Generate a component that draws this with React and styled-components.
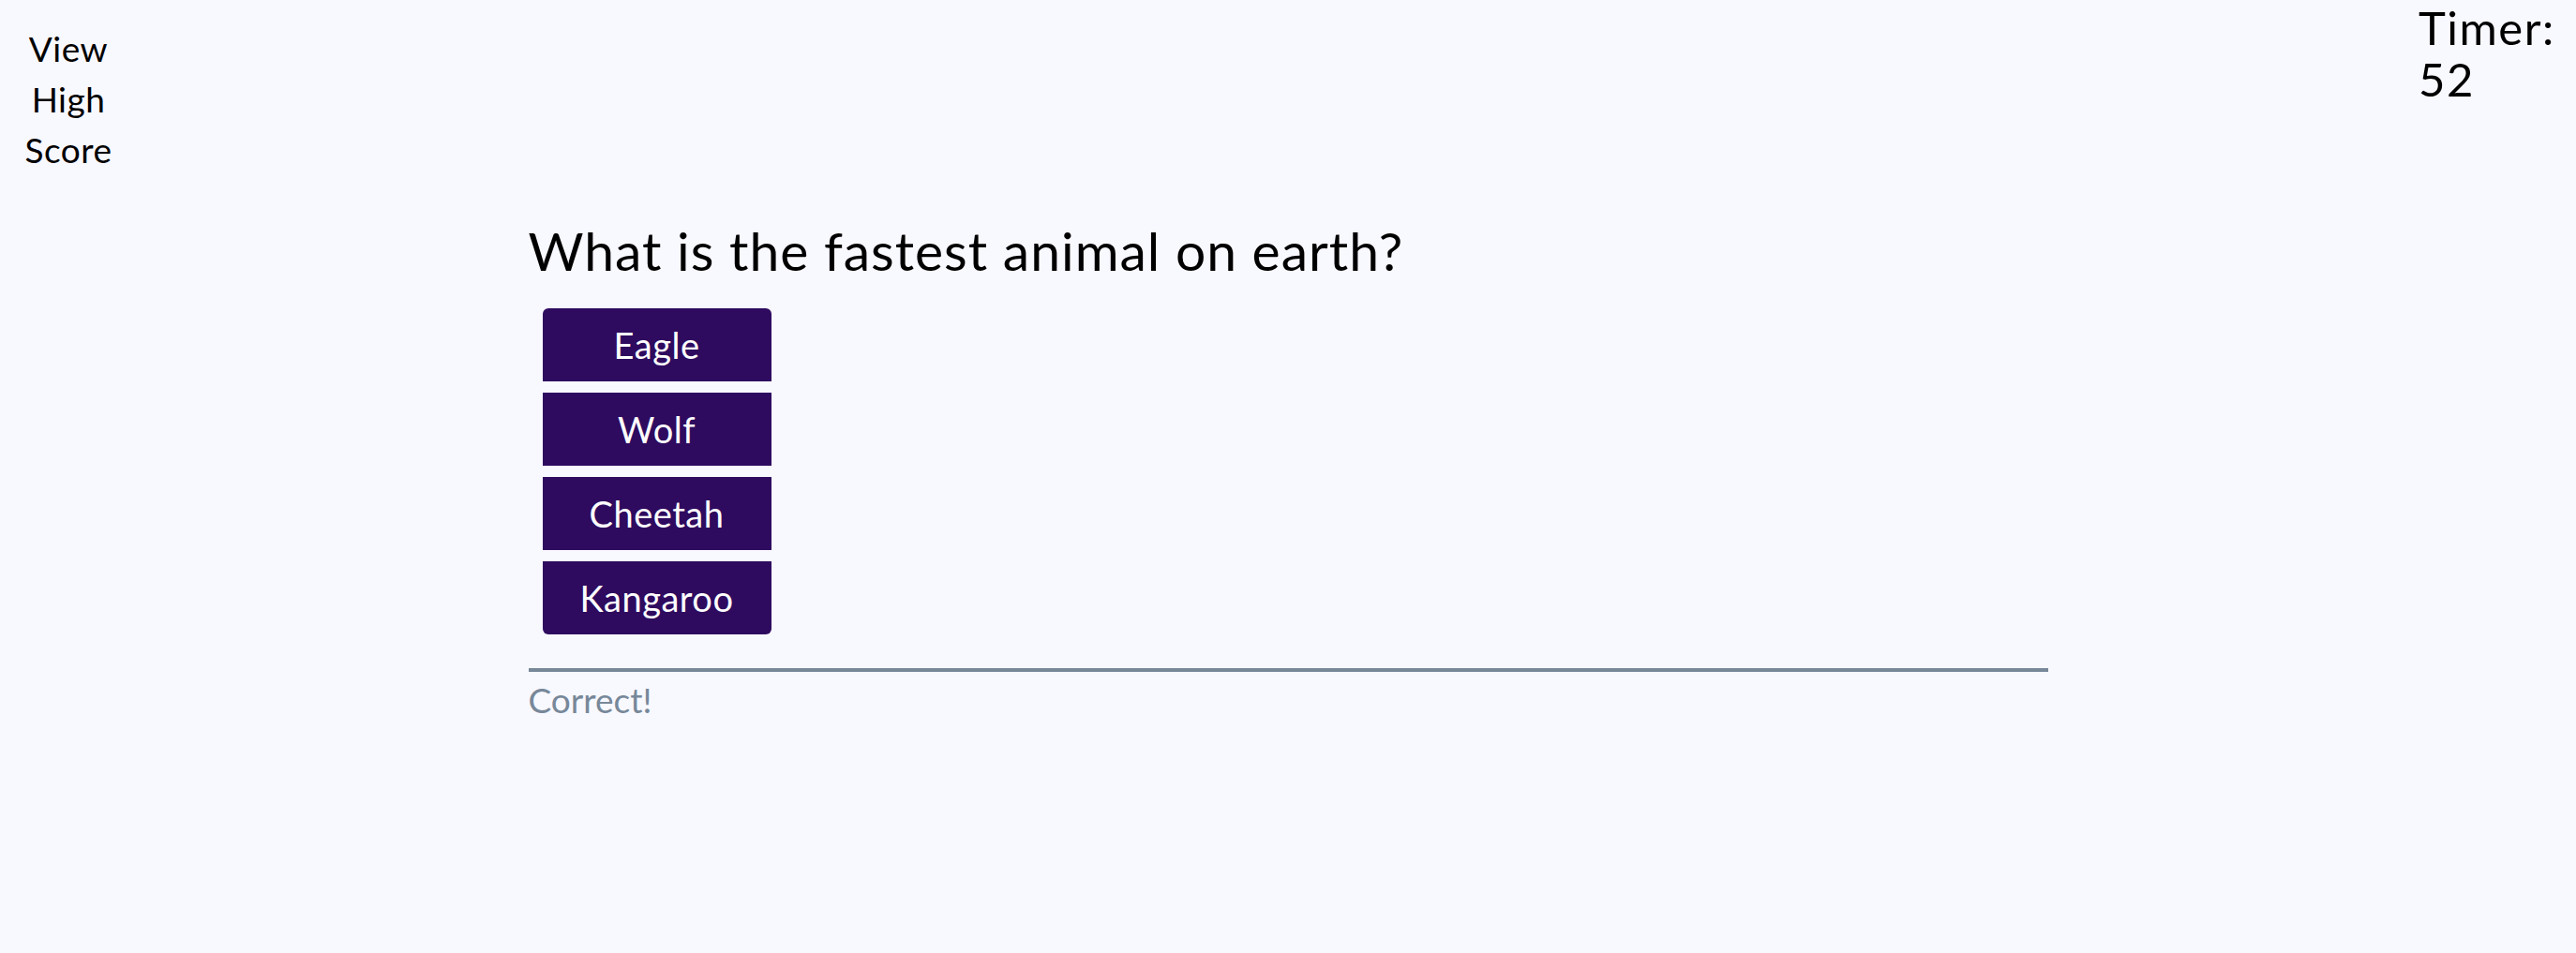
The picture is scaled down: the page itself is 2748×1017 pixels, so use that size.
import React from 'react';
import styled, { createGlobalStyle } from 'styled-components';

const GlobalStyle = createGlobalStyle`
  html, body {
    margin: 0;
    padding: 0;
    background: #f8f8ff;
    font-family: Lato, "Noto Sans", sans-serif;
    color: #000;
  }
`;

const answers = ['Eagle', 'Wolf', 'Cheetah', 'Kangaroo'];

const App = () => {
  return (
    <>
      <GlobalStyle />
      <StyledHeader>
        <StyledHighScore>View High Score</StyledHighScore>
        <StyledTimer>
          Timer: <span>52</span>
        </StyledTimer>
      </StyledHeader>

      <StyledQuiz>
        <StyledQuestion>What is the fastest animal on earth?</StyledQuestion>
        <StyledAnswers>
          {answers.map((answer) => (
            <StyledAnswer key={answer}>{answer}</StyledAnswer>
          ))}
        </StyledAnswers>
        <StyledResult>Correct!</StyledResult>
      </StyledQuiz>
    </>
  );
};

export default App;

const StyledHeader = styled.header`
  display: flex;
  justify-content: space-between;
  align-items: flex-start;
`;

const StyledHighScore = styled.a`
  display: block;
  width: 110px;
  margin: 25px 0 0 18px;
  font-size: 37px;
  line-height: 54px;
  letter-spacing: 0.5px;
  text-align: center;
  cursor: pointer;
`;

const StyledTimer = styled.div`
  width: 168px;
  font-size: 49px;
  line-height: 55px;
  letter-spacing: 1.5px;
  margin-top: 2px;

  span {
    display: block;
  }
`;

const StyledQuiz = styled.main`
  width: 1621px;
  margin: 46px auto 0;
`;

const StyledQuestion = styled.h1`
  margin: 0;
  font-size: 57px;
  font-weight: 400;
  line-height: 68px;
  letter-spacing: 1px;
`;

const StyledAnswers = styled.div`
  display: flex;
  flex-direction: column;
  gap: 12px;
  width: 244px;
  margin: 28px 0 0 15px;

  & > button:first-child {
    border-radius: 6px 6px 0 0;
  }
  & > button:last-child {
    border-radius: 0 0 6px 6px;
  }
`;

const StyledAnswer = styled.button`
  height: 78px;
  border: 0;
  border-radius: 0;
  background: #2e0b5f;
  color: #fff;
  font-family: inherit;
  font-size: 38px;
  letter-spacing: 0.5px;
  cursor: pointer;
`;

const StyledResult = styled.p`
  margin: 36px 0 0;
  padding-top: 8px;
  border-top: 4px solid #778899;
  color: #778899;
  font-size: 37px;
  line-height: 44px;
`;
